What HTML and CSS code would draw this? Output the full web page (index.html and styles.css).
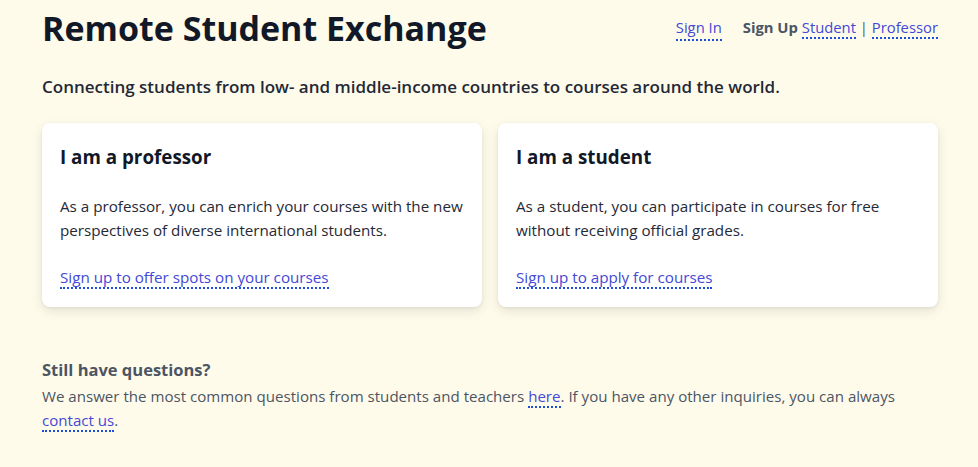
FILE: index.html
```html
<!DOCTYPE html>
<html lang="en">
<head>
<meta charset="utf-8">
<title>Remote Student Exchange</title>
<link rel="stylesheet" href="styles.css">
</head>
<body>
<div class="page">
  <header class="header">
    <h1 class="title">Remote Student Exchange</h1>
    <nav class="nav">
      <a class="link" href="#">Sign In</a>
      <span class="signup"><b class="signup-label">Sign Up</b> <a class="link" href="#">Student</a> | <a class="link" href="#">Professor</a></span>
    </nav>
  </header>
  <p class="tagline">Connecting students from low- and middle-income countries to courses around the world.</p>
  <section class="cards">
    <div class="card">
      <h2 class="card-title">I am a professor</h2>
      <p class="card-text">As a professor, you can enrich your courses with the new perspectives of diverse international students.</p>
      <p class="card-action"><a class="link" href="#">Sign up to offer spots on your courses</a></p>
    </div>
    <div class="card">
      <h2 class="card-title">I am a student</h2>
      <p class="card-text">As a student, you can participate in courses for free without receiving official grades.</p>
      <p class="card-action"><a class="link" href="#">Sign up to apply for courses</a></p>
    </div>
  </section>
  <section class="faq">
    <h3 class="faq-title">Still have questions?</h3>
    <p class="faq-text">We answer the most common questions from students and teachers <a class="link" href="#">here</a>. If you have any other inquiries, you can always <a class="link" href="#">contact us</a>.</p>
  </section>
</div>
</body>
</html>
```
FILE: styles.css
```css
* { box-sizing: border-box; }
html, body { margin: 0; padding: 0; }
body {
  background: #fffbeb;
  font-family: "Open Sans", "Noto Sans", sans-serif;
  color: #111827;
  font-size: 15.2px;
  line-height: 24px;
}
.page {
  width: 896px;
  margin: 0 40px 0 42px;
}
.header {
  display: flex;
  justify-content: space-between;
  align-items: flex-start;
  padding-top: 4px;
}
.title {
  margin: 0;
  font-size: 34px;
  line-height: 48px;
  font-weight: 700;
  color: #111827;
}
.nav {
  display: flex;
  gap: 21px;
  font-size: 14.8px;
  line-height: 24px;
  padding-top: 11px;
  color: #4b5563;
}
.signup-label { font-weight: 700; }
.link {
  color: #4348d6;
  text-decoration: none;
  border-bottom: 2px dotted #1d4ed8;
}
.tagline {
  margin: 21px 0 0;
  font-size: 17px;
  line-height: 28px;
  font-weight: 600;
  color: #1f2937;
}
.cards {
  display: grid;
  grid-template-columns: 1fr 1fr;
  gap: 16px;
  margin-top: 22px;
}
.card {
  background: #fff;
  border-radius: 8px;
  box-shadow: 0 4px 12px rgba(0,0,0,0.10), 0 1px 3px rgba(0,0,0,0.06);
  padding: 20px 18px 18px;
}
.card-title {
  margin: 0;
  font-size: 18.8px;
  line-height: 28px;
  font-weight: 700;
}
.card-text {
  margin: 23px 0 23px;
  font-size: 15.2px;
  line-height: 24px;
  color: #1f2937;
}
.card-action {
  margin: 0;
  line-height: 24px;
}
.faq {
  margin-top: 49px;
  color: #4b5563;
}
.faq-title {
  margin: 0;
  font-size: 16.5px;
  line-height: 28px;
  font-weight: 700;
}
.faq-text {
  margin: 0;
  font-size: 15.1px;
  line-height: 24px;
}
```
